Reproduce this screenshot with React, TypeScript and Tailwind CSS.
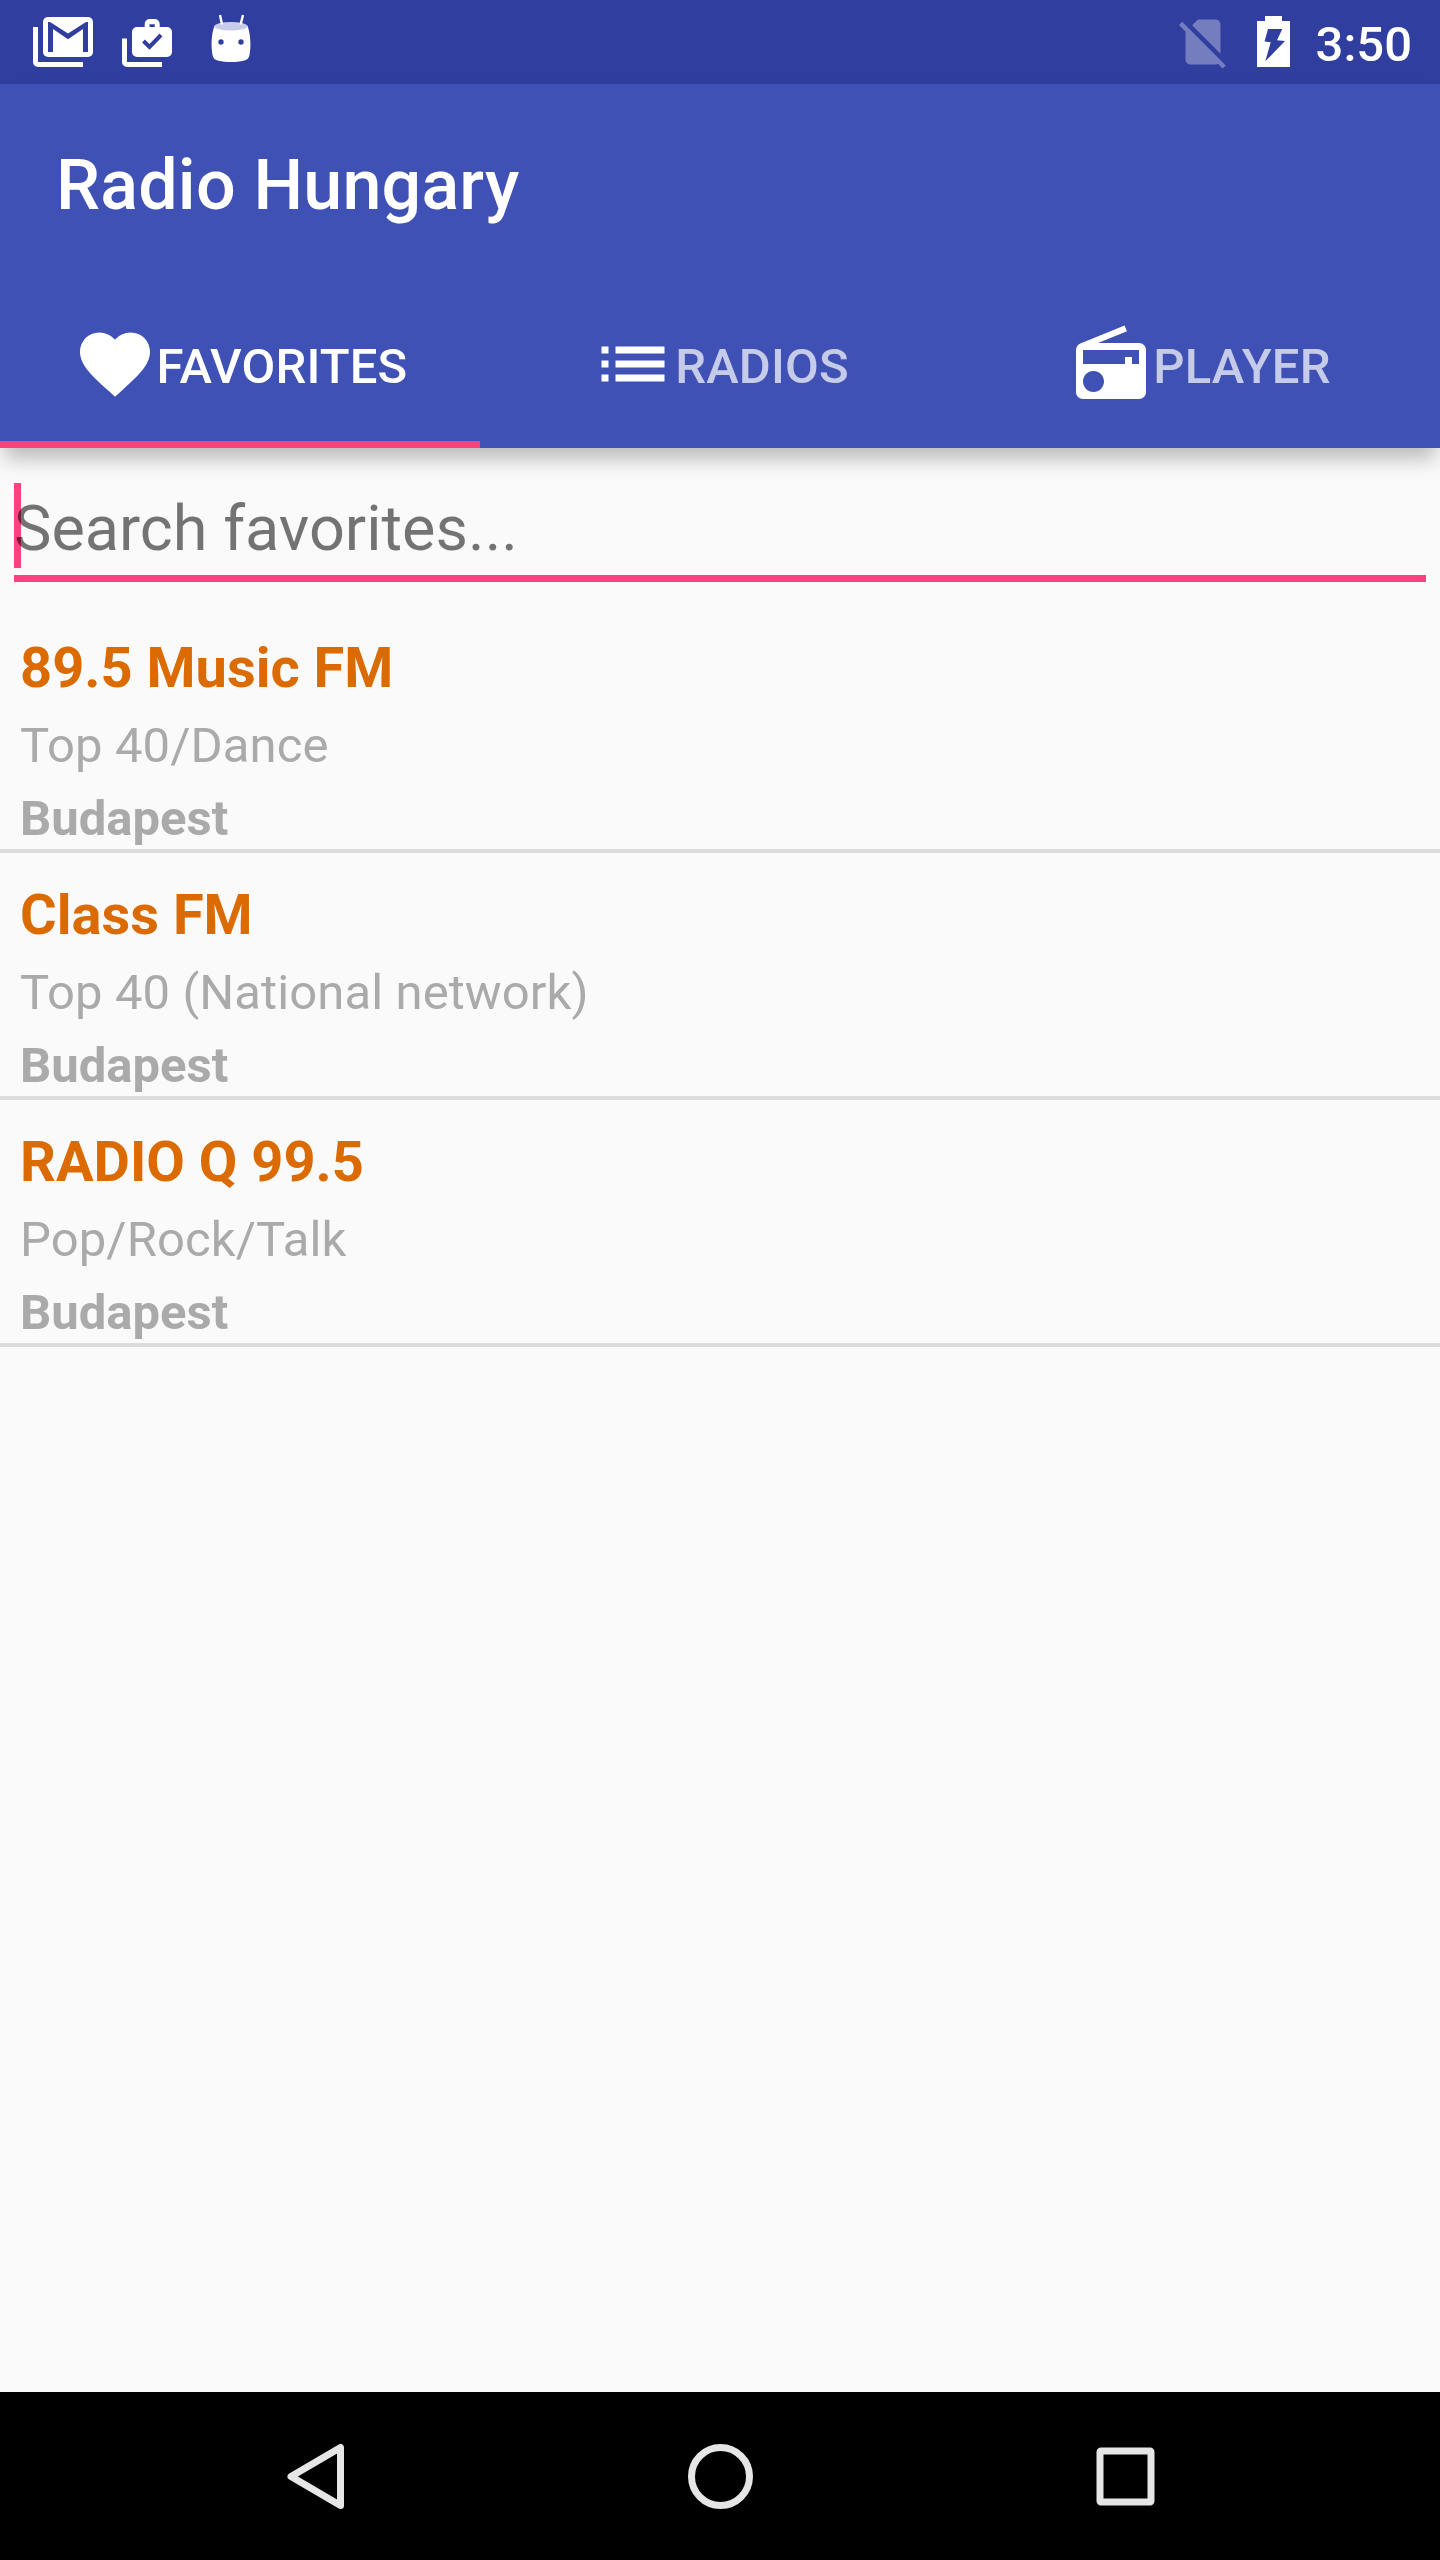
import { useState } from "react";
import type { ReactNode } from "react";

type Station = {
    name: string;
    genre: string;
    city: string;
};

const stations: Station[] = [
    { name: "89.5 Music FM", genre: "Top 40/Dance", city: "Budapest" },
    { name: "Class FM", genre: "Top 40 (National network)", city: "Budapest" },
    { name: "RADIO Q 99.5", genre: "Pop/Rock/Talk", city: "Budapest" },
];

const MailIcon = () => (
    <svg width="60" height="84" viewBox="0 0 60 84" fill="none">
        <path d="M0 27h5v35h45v5H5a5 5 0 0 1-5-5z" fill="#fff" />
        <rect x="10" y="17" width="50" height="40" rx="5" fill="#fff" />
        <path d="M15 52V22h2l18 11.5L53 22h2v30h-5V29L35 39.3 20 29v23z" fill="#303f9f" />
    </svg>
);

const StoreIcon = () => (
    <svg width="50" height="84" viewBox="0 0 50 84" fill="none">
        <path d="M0 38.5h5V62h35v5H5a5 5 0 0 1-5-5z" fill="#fff" />
        <path
            fillRule="evenodd"
            d="M15 27h7.7v-3a5 5 0 0 1 5-5h5a5 5 0 0 1 5 5v3H45a5 5 0 0 1 5 5v20a5 5 0 0 1-5 5H15a5 5 0 0 1-5-5V32a5 5 0 0 1 5-5zM27.5 24.2h5.3V27h-5.3z"
            fill="#fff"
        />
        <path d="M21.5 41l6 6L39 35" stroke="#303f9f" strokeWidth="4" />
    </svg>
);

const DroidIcon = () => (
    <svg width="40" height="84" viewBox="0 0 40 84" fill="none">
        <path
            d="M3.5 26C1 32-.5 45 1.5 55c.7 3.5 2.5 5 6 5.8 7 1.6 18 1.6 25 0 3.500-.8 5.300-2.300 6-5.800 2-10 .5-23-2-29z"
            fill="#fff"
        />
        <ellipse cx="20" cy="26.2" rx="16.7" ry="4.3" fill="#c9cce6" />
        <path d="M9 15l2 9.500M32 15l-2.400 9.500" stroke="#fff" strokeWidth="2.4" />
        <circle cx="10" cy="42" r="2.7" fill="#303f9f" />
        <circle cx="30" cy="42" r="2.7" fill="#303f9f" />
    </svg>
);

const NoSimIcon = () => (
    <svg width="60" height="60" viewBox="0 0 24 24" fill="#fff" fillOpacity="0.33">
        <path d="M18.99 5c0-1.100-.89-2-1.990-2h-7L7.660 5.340 19 16.680 18.990 5zM3.650 3.880L2.380 5.150 5 7.770V19c0 1.100.9 2 2 2h10.010c.35 0 .67-.1.960-.260l1.880 1.880 1.270-1.270L3.650 3.880z" />
    </svg>
);

const BatteryIcon = () => (
    <svg width="33" height="84" viewBox="0 0 33 84">
        <path d="M8 16h17v5h8v46H0V21h8z" fill="#fff" />
        <path d="M11 29h14.300L20 40.300l8 .7L8.300 61.300l5.400-19-6.200-.8z" fill="#303f9f" />
    </svg>
);

const HeartIcon = () => (
    <svg width="84" height="84" viewBox="0 0 24 24" fill="#fff">
        <path d="M12 21.35l-1.450-1.320C5.400 15.360 2 12.280 2 8.500 2 5.420 4.420 3 7.500 3c1.740 0 3.410.810 4.500 2.090C13.090 3.810 14.760 3 16.500 3 19.580 3 22 5.420 22 8.500c0 3.780-3.400 6.860-8.550 11.540L12 21.350z" />
    </svg>
);

const ListIcon = () => (
    <svg width="84" height="84" viewBox="0 0 24 24" fill="#fff">
        <path d="M3 13h2v-2H3v2zm0 4h2v-2H3v2zm0-8h2V7H3v2zm4 4h14v-2H7v2zm0 4h14v-2H7v2zM7 7v2h14V7H7z" />
    </svg>
);

const RadioIcon = () => (
    <svg width="84" height="84" viewBox="0 0 24 24" fill="#fff">
        <path d="M3.24 6.150C2.510 6.430 2 7.170 2 8v12c0 1.100.890 2 2 2h16c1.110 0 2-.9 2-2V8c0-1.110-.890-2-2-2H8.300l8.260-3.340L15.880 1 3.240 6.150zM7 20c-1.660 0-3-1.340-3-3s1.340-3 3-3 3 1.340 3 3-1.340 3-3 3zm13-8h-2v-2h-2v2H4V8h16v4z" />
    </svg>
);

const tabs: { label: string; icon: ReactNode }[] = [
    { label: "FAVORITES", icon: <HeartIcon /> },
    { label: "RADIOS", icon: <ListIcon /> },
    { label: "PLAYER", icon: <RadioIcon /> },
];

const StatusBar = () => (
    <div className="flex h-[84px] justify-between bg-[#303f9f] pl-[33px] pr-[28px]">
        <div className="flex">
            <MailIcon />
            <div className="ml-[29px]">
                <StoreIcon />
            </div>
            <div className="ml-[39px]">
                <DroidIcon />
            </div>
        </div>
        <div className="flex">
            <div className="pt-[12px]">
                <NoSimIcon />
            </div>
            <div className="ml-6">
                <BatteryIcon />
            </div>
            <span className="ml-[26px] pt-[3px] text-[49px] leading-[84px] font-medium text-white">3:50</span>
        </div>
    </div>
);

const NavBar = () => (
    <nav className="flex h-[168px] items-center justify-center gap-[308px] bg-black">
        <button type="button" aria-label="Back">
            <svg width="96" height="96" viewBox="0 0 96 96" fill="none">
                <path d="M72.500 19.500v58L23 48.500z" stroke="#e6e6e6" strokeWidth="7" strokeLinejoin="round" />
            </svg>
        </button>
        <button type="button" aria-label="Home">
            <svg width="96" height="96" viewBox="0 0 96 96" fill="none">
                <circle cx="48.5" cy="48.5" r="29" stroke="#e6e6e6" strokeWidth="7" />
            </svg>
        </button>
        <button type="button" aria-label="Recent apps">
            <svg width="96" height="96" viewBox="0 0 96 96" fill="none">
                <rect x="24" y="23" width="51" height="51" rx="1" stroke="#e6e6e6" strokeWidth="7" strokeLinejoin="round" />
            </svg>
        </button>
    </nav>
);

const App = () => {
    const [active, setActive] = useState(0);
    const [search, setSearch] = useState("");

    return (
        <div className="flex h-[2560px] w-[1440px] flex-col overflow-hidden bg-[#fafafa] font-[Roboto,sans-serif]">
            <StatusBar />

            <header className="relative z-10 bg-[#3f51b5] shadow-[0_14px_20px_-4px_rgba(0,0,0,0.27)]">
                <h1 className="h-[196px] pt-[3px] pl-14 text-[70px] leading-[196px] font-medium tracking-[0.2px] text-white">
                    Radio Hungary
                </h1>
                <div className="flex h-[168px]">
                    {tabs.map((tab, i) => (
                        <button
                            key={tab.label}
                            type="button"
                            onClick={() => setActive(i)}
                            className={`flex flex-1 items-center justify-center border-b-[7px] pt-[7px] text-[49px] font-medium tracking-[0.15px] ${
                                active === i ? "border-[#ff4081] text-white" : "border-transparent text-white/70"
                            }`}
                        >
                            <span className="blur-[0.7px]">{tab.icon}</span>
                            <span className="pt-[5px] leading-[60px]">{tab.label}</span>
                        </button>
                    ))}
                </div>
            </header>

            <main className="flex-1">
                {/* Search field */}
                <div className="px-[14px] pt-[35px] pb-6">
                    <div className="relative h-[99px] border-b-[7px] border-[#ff4081]">
                        <div className="absolute top-0 left-0 h-[85px] w-[7px] bg-[#ff4081]" />
                        <input
                            type="text"
                            value={search}
                            onChange={(e) => setSearch(e.target.value)}
                            placeholder="Search favorites..."
                            className="relative block h-[92px] w-full bg-transparent pt-px text-[63px] text-black/87 outline-none placeholder:text-black/54"
                        />
                    </div>
                </div>

                {/* Stations */}
                <ul>
                    {stations.map((station) => (
                        <li key={station.name} className="h-[247px] border-b-4 border-[#dcdcdc] pt-[29px] pl-5">
                            <p className="text-[56px] leading-[66px] font-bold text-[#db6a00]">{station.name}</p>
                            <p className="text-[49px] leading-[90px] tracking-[0.1px] text-[#aaaaaa]">{station.genre}</p>
                            <p className="text-[49px] leading-[56px] font-bold text-[#aaaaaa]">{station.city}</p>
                        </li>
                    ))}
                </ul>
            </main>

            <NavBar />
        </div>
    );
};

export default App;
